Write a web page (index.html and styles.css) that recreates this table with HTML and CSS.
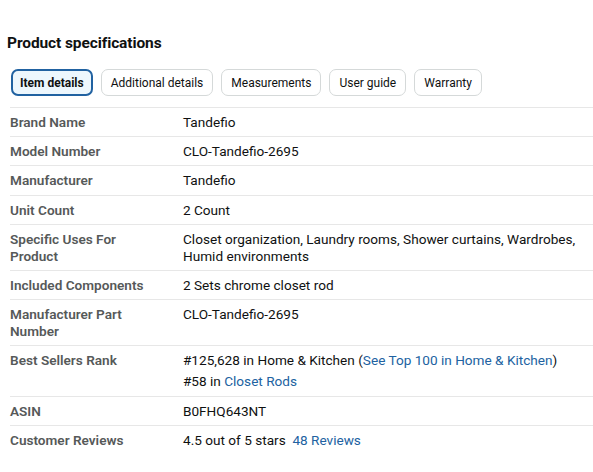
FILE: index.html
```html
<!DOCTYPE html>
<html lang="en">
<head>
  <meta charset="UTF-8" />
  <title>Product specifications</title>
  <link rel="stylesheet" href="styles.css">
</head>
<body>
  <div class="specs">
    <h2>Product specifications</h2>

    <div class="tabs">
      <button class="tab active">Item details</button>
      <button class="tab">Additional details</button>
      <button class="tab">Measurements</button>
      <button class="tab">User guide</button>
      <button class="tab">Warranty</button>
    </div>

    <table class="spec-table">
      <tr><th>Brand Name</th><td>Tandefio</td></tr>
      <tr><th>Model Number</th><td>CLO-Tandefio-2695</td></tr>
      <tr><th>Manufacturer</th><td>Tandefio</td></tr>
      <tr><th>Unit Count</th><td>2 Count</td></tr>
      <tr><th>Specific Uses For Product</th><td>Closet organization, Laundry rooms, Shower curtains, Wardrobes, Humid environments</td></tr>
      <tr><th>Included Components</th><td>2 Sets chrome closet rod</td></tr>
      <tr><th>Manufacturer Part Number</th><td>CLO-Tandefio-2695</td></tr>
      <tr>
        <th>Best Sellers Rank</th>
        <td>
          <div class="rank">#125,628 in Home &amp; Kitchen (<a href="#">See Top 100 in Home &amp; Kitchen</a>)</div>
          <div class="rank">#58 in <a href="#">Closet Rods</a></div>
        </td>
      </tr>
      <tr><th>ASIN</th><td>B0FHQ643NT</td></tr>
      <tr><th>Customer Reviews</th><td>4.5 out of 5 stars&nbsp; <a href="#">48 Reviews</a></td></tr>
    </table>
  </div>
</body>
</html>
```

FILE: styles.css
```css
* {
  box-sizing: border-box;
  font-family: Roboto, 'Noto Sans', sans-serif;
}

html, body {
  margin: 0;
  padding: 0;
  background: #fff;
  color: #0f1111;
}

.specs {
  padding: 33px 0 0 10px;
}

h2 {
  margin: 0 0 0 -3px;
  font-size: 15.5px;
  line-height: 20px;
  font-weight: 700;
  letter-spacing: -0.1px;
  color: #0f1111;
}

.tabs {
  display: flex;
  gap: 8px;
  margin-top: 16px;
  padding: 0 0 11px 1px;
  border-bottom: 1px solid #e7e7e7;
}

.tab {
  height: 27px;
  padding: 0 9px;
  border: 1px solid #d5d9d9;
  border-radius: 7px;
  background: #fff;
  color: #0f1111;
  font-size: 12px;
  cursor: pointer;
}

.tab.active {
  border: 2px solid #2162a1;
  background: #edf7fd;
  font-weight: 700;
  padding: 0 7px;
}

.spec-table {
  width: 100%;
  border-collapse: collapse;
  font-size: 13.6px;
  line-height: 17px;
}

.spec-table th,
.spec-table td {
  padding: 6px 0 5.2px;
  text-align: left;
  vertical-align: top;
  border-bottom: 1px solid #e7e7e7;
}

.spec-table tr:last-child th,
.spec-table tr:last-child td {
  border-bottom: none;
}

.spec-table th {
  width: 173px;
  padding-right: 24px;
  color: #565959;
  font-weight: 600;
}

.spec-table td {
  padding-right: 8px;
}

.rank + .rank {
  margin-top: 4px;
}

a {
  color: #2162a1;
  text-decoration: none;
}
```
